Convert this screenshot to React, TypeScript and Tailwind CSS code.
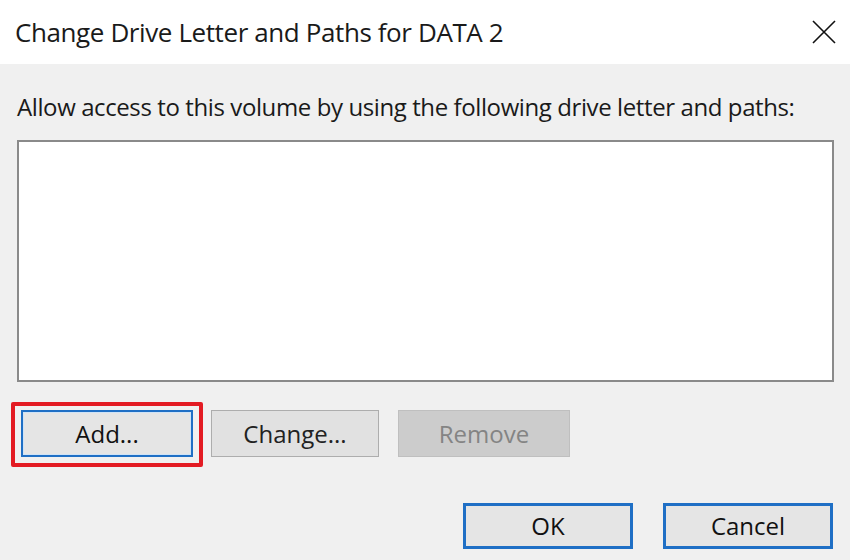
import React from "react";

const font = { fontFamily: '"Open Sans", "Noto Sans", Arial, sans-serif' };

function CloseIcon() {
  return (
    <svg width="24" height="24" viewBox="0 0 24 24" fill="none" stroke="#111" strokeWidth="1.6">
      <path d="M1 1 L23 23 M23 1 L1 23" />
    </svg>
  );
}

export default function App() {
  return (
    <div className="w-[850px] h-[560px] bg-[#f0f0f0] flex flex-col overflow-hidden" style={font}>
      <div className="h-[64px] bg-white flex items-center justify-between pl-[15px] pr-[14px] shrink-0">
        <span className="text-[26px] text-[#1a1a1a] tracking-[-0.4px] leading-none">
          Change Drive Letter and Paths for DATA 2
        </span>
        <CloseIcon />
      </div>
      <div className="flex flex-col px-[17px]">
        <div className="mt-[28px] h-[30px] flex items-center text-[24px] text-[#1a1a1a] tracking-[-0.4px] leading-none">
          Allow access to this volume by using the following drive letter and paths:
        </div>
        <div className="mt-[18px] h-[242px] w-[817px] bg-white border-2 border-[#8a8a8a]" />
        <div className="mt-[28px] flex items-start gap-[18px] pl-[4px]">
          <div className="relative">
            <div className="absolute -left-[10px] -top-[8px] w-[192px] h-[65px] border-[4px] border-[#e31b23] rounded-[2px]" />
            <button className="w-[172px] h-[47px] bg-[#e5e5e5] border-2 border-[#1f6fc5] text-[24px] text-[#111] flex items-center justify-center shadow-[inset_0_0_0_1px_#cfe3f7]">
              Add...
            </button>
          </div>
          <button className="w-[168px] h-[47px] bg-[#e1e1e1] border border-[#adadad] text-[24px] text-[#222] flex items-center justify-center">
            Change...
          </button>
          <button className="ml-[1px] w-[172px] h-[47px] bg-[#cccccc] border border-[#bfbfbf] text-[24px] text-[#848484] flex items-center justify-center">
            Remove
          </button>
        </div>
        <div className="mt-[46px] flex justify-end gap-[30px]">
          <button className="w-[170px] h-[46px] bg-[#e5e5e5] border-[3px] border-[#1f6fc5] text-[24px] text-[#111] flex items-center justify-center">
            OK
          </button>
          <button className="w-[170px] h-[46px] bg-[#e5e5e5] border-[3px] border-[#1f6fc5] text-[24px] text-[#111] flex items-center justify-center">
            Cancel
          </button>
        </div>
      </div>
    </div>
  );
}
